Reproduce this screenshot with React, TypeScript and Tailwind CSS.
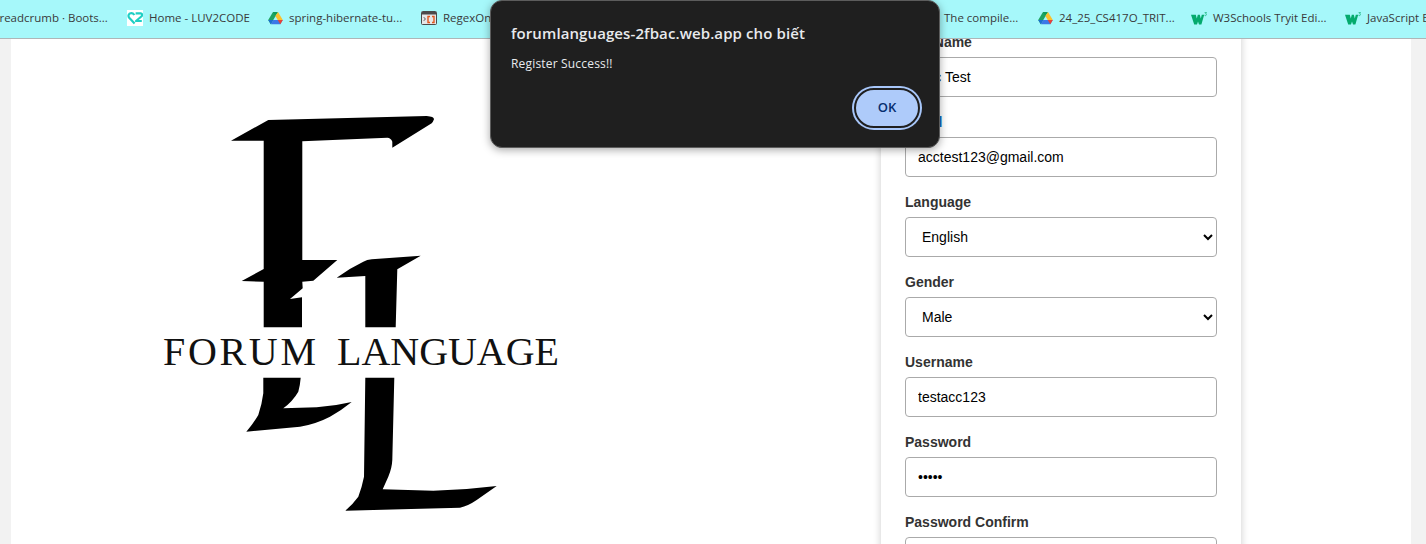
const UI_FONT = "font-['Open_Sans','Noto_Sans',sans-serif]"

function Luv2CodeIcon() {
  return (
    <svg viewBox="0 0 16 16" className="w-4 h-4 shrink-0 bg-white">
      <path
        d="M7.6 13.6 2.2 7.8C.8 6 1.6 3.2 4 3.1c1.5-.1 2.6.7 3.4 1.9M8.6 3.3h5.2c1.4 0 1.7 2.2.5 3.2L9 11h5.8"
        fill="none"
        stroke="#1fcfc4"
        strokeWidth="2.2"
        strokeLinejoin="round"
      />
    </svg>
  )
}

function DriveIcon() {
  return (
    <svg viewBox="0 0 16 14" className="w-[15px] h-[14px] shrink-0">
      <polygon points="5.3,0.5 10.7,0.5 8,5.2 5.3,5.2" fill="#0f9d58" />
      <polygon points="5.3,0.5 8,5.2 2.9,13.6 0.2,9" fill="#1ea362" />
      <polygon points="10.7,0.5 15.8,9 10.4,9 7.8,4.8" fill="#fbc02d" />
      <polygon points="3,13.6 5.6,9 15.8,9 13.1,13.6" fill="#3b78e7" />
      <polygon points="0.2,9 5.6,9 3,13.6" fill="#1c6fd1" />
      <polygon points="10.4,9 15.8,9 13.1,13.6" fill="#ea4335" />
    </svg>
  )
}

function RegexIcon() {
  return (
    <svg viewBox="0 0 16 14" className="w-4 h-[14px] shrink-0">
      <rect x="0.5" y="0.5" width="15" height="13" rx="1" fill="#e5e7e8" stroke="#4a4a4a" />
      <rect x="1" y="1" width="14" height="2.5" fill="#4a4a4a" />
      <path d="M2.8 6.2 4.4 8 2.8 9.8" fill="none" stroke="#555" strokeWidth="1" />
      <path d="M9 5.5H7v6h2M11 5.5h2v6h-2" fill="none" stroke="#e2571e" strokeWidth="1.4" />
    </svg>
  )
}

function W3Icon() {
  return (
    <svg viewBox="0 0 16 13" className="w-4 h-[13px] shrink-0">
      <path d="M0 2.8h4.8l1 3.6 1-3.6h2l1 3.6 1-3.6h2.4L10.4 12.6H8L7 9.4 6 12.6H3.2z" fill="#04aa6d" />
      <path d="M13.6.6h2l-.9 1.2c.9.2.9 1.7-.2 1.8-.4 0-.7-.1-1-.3" fill="none" stroke="#04aa6d" strokeWidth=".7" />
    </svg>
  )
}

function Bookmark({ icon, label, width }: { icon?: React.ReactNode; label: string; width: string }) {
  return (
    <div className={`flex items-center gap-1.5 shrink-0 ${width}`}>
      {icon}
      <span className="whitespace-nowrap">{label}</span>
    </div>
  )
}

function BookmarkBar() {
  return (
    <div className={`h-[39px] bg-[#a6f8fa] border-b border-[#aeb6b8] flex items-center overflow-hidden text-[11.5px] text-[#3a3a3a] ${UI_FONT}`}>
      <div className="flex items-center -ml-[8px] mt-[-2px]">
        <Bookmark label="Breadcrumb · Boots..." width="w-[135px]" />
        <Bookmark icon={<Luv2CodeIcon />} label="Home - LUV2CODE" width="w-[141px]" />
        <Bookmark icon={<DriveIcon />} label="spring-hibernate-tu..." width="w-[153px]" />
        <Bookmark icon={<RegexIcon />} label="RegexOne - Learn..." width="w-[523px]" />
        <Bookmark label="The compile..." width="w-[94px]" />
        <Bookmark icon={<DriveIcon />} label="24_25_CS417O_TRIT..." width="w-[153px]" />
        <Bookmark icon={<W3Icon />} label="W3Schools Tryit Edi..." width="w-[154px]" />
        <Bookmark icon={<W3Icon />} label="JavaScript Basics" width="w-[120px]" />
      </div>
    </div>
  )
}

function ForumLogo() {
  return (
    <svg viewBox="0 0 869 505" className="w-[869px] h-[505px] shrink-0">
      <g transform="translate(-11 -39)">
        <path d="M231 140.7 268.3 120 426.7 116Q434 116.5 434 119.3 433 122 431.7 123.3L392.3 147.7 392.3 141.7Q391 138 387.3 137.7L302.3 141.3 302.3 260 337.3 260 313.3 280.7 302.3 281.7 302.7 288.3 290 299 302 297.3 302 327.3 263.7 327.3 263.7 281.7 241.7 281 263.7 269 263.7 140.7Z" />
        <path d="M336.7 277.7Q350 268 363.3 261.7 367 259.8 371.7 259.3L420.7 255.7 397.3 269.3 395.7 327.3 365.3 327.3 365.3 276Z" />
        <path d="M263.3 377.7 300.7 377.7Q300 386 298.3 391.7 293 401 283.3 408.3L316.7 407.3Q335 406 351.7 402 342 410 330 416.7 316 424 300 426.7L246.3 431.7Q253 424 258.3 415 262 404 263.3 393.3Z" />
        <path d="M365.3 377.7 394.3 377.7 392.3 460Q392 468 388.3 476.7L382.7 489.3 433.3 490.7Q465 490 496.7 486L476.7 500Q468 506 460 507.7L345.3 510.7Q353 504 358.3 496.7 362 487 364 476.7Z" />
        <text x="163" y="365" textLength="153" lengthAdjust="spacing" fontFamily="'Liberation Serif', serif" fontSize="40" fill="#111">
          FORUM
        </text>
        <text x="337" y="365" textLength="222" lengthAdjust="spacing" fontFamily="'Liberation Serif', serif" fontSize="40" fill="#111">
          LANGUAGE
        </text>
      </g>
    </svg>
  )
}

const FIELD = "h-10 w-full rounded border border-[#aaa] bg-white px-3 text-sm text-black outline-none"

function Field({ label, children }: { label: React.ReactNode; children: React.ReactNode }) {
  return (
    <div className="h-20 shrink-0">
      <div className="h-[25px] pt-[2px] text-sm leading-[16px] font-bold text-[#333]">{label}</div>
      {children}
    </div>
  )
}

function RegisterForm() {
  return (
    <div className="w-[360px] shrink-0 bg-white px-6 shadow-[0_0_8px_rgba(0,0,0,0.2)] flex flex-col h-[600px] font-['Liberation_Sans',sans-serif] -mt-[7px]">
      <Field label="Full Name">
        <input className={FIELD} readOnly value="Acc Test" />
      </Field>
      <Field label={<>Emai<span className="text-[#1769c2]">l</span></>}>
        <input className={FIELD} readOnly value="acctest123@gmail.com" />
      </Field>
      <Field label="Language">
        <select className={FIELD} defaultValue="English">
          <option>English</option>
        </select>
      </Field>
      <Field label="Gender">
        <select className={FIELD} defaultValue="Male">
          <option>Male</option>
        </select>
      </Field>
      <Field label="Username">
        <input className={FIELD} readOnly value="testacc123" />
      </Field>
      <Field label="Password">
        <input className={FIELD} type="password" readOnly value="12345" />
      </Field>
      <Field label="Password Confirm">
        <input className={FIELD} type="password" readOnly value="" />
      </Field>
    </div>
  )
}

function AlertDialog() {
  return (
    <div className={`absolute left-[490px] top-0 w-[450px] h-[148px] rounded-xl border border-[#5c5c5c] bg-[#1f1f1f] shadow-[0_2px_8px_rgba(0,0,0,0.35)] px-5 text-[#e8eaed] ${UI_FONT}`}>
      <div className="pt-[22px] text-[15px] leading-5 font-semibold tracking-[0.1px]">forumlanguages-2fbac.web.app cho biết</div>
      <div className="mt-[12px] text-xs leading-[18px] tracking-[0.18px]">Register Success!!</div>
      <div className="flex justify-end mt-[13px] -mr-[3px]">
        <button className="w-[66px] h-[40px] m-0.5 rounded-full bg-[#aecbfa] text-[#062e6f] text-[13px] font-semibold border-2 border-[#1f1f1f] ring-2 ring-[#a8c7fa]">
          OK
        </button>
      </div>
    </div>
  )
}

export default function App() {
  return (
    <div className="relative h-[544px] w-[1426px] overflow-hidden bg-[#f2f2f2]">
      <BookmarkBar />
      <div className="mx-[11px] w-[1400px] h-[505px] overflow-hidden bg-white flex">
        <ForumLogo />
        <div className="w-px shrink-0" />
        <RegisterForm />
      </div>
      <AlertDialog />
    </div>
  )
}
